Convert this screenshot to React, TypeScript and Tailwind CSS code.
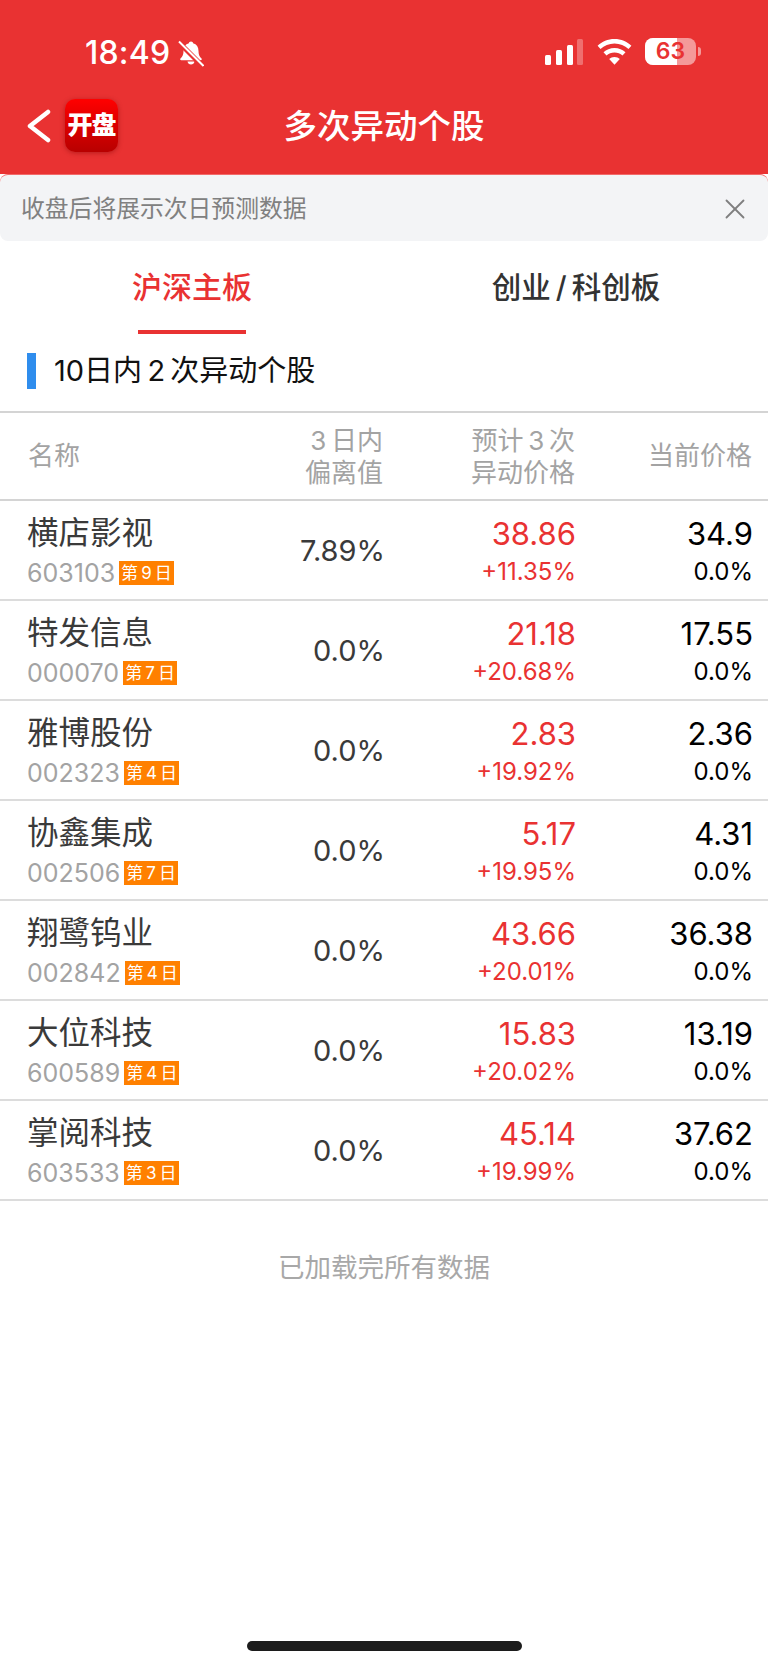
import { X } from 'lucide-react';

const font = { fontFamily: '"Inter", "Noto Sans CJK SC", sans-serif' };

const stocks = [
  { name: '横店影视', code: '603103', days: '第\u20099\u2009日', dev: '7.89%', target: '38.86', pct: '+11.35%', price: '34.9' },
  { name: '特发信息', code: '000070', days: '第\u20097\u2009日', dev: '0.0%', target: '21.18', pct: '+20.68%', price: '17.55' },
  { name: '雅博股份', code: '002323', days: '第\u20094\u2009日', dev: '0.0%', target: '2.83', pct: '+19.92%', price: '2.36' },
  { name: '协鑫集成', code: '002506', days: '第\u20097\u2009日', dev: '0.0%', target: '5.17', pct: '+19.95%', price: '4.31' },
  { name: '翔鹭钨业', code: '002842', days: '第\u20094\u2009日', dev: '0.0%', target: '43.66', pct: '+20.01%', price: '36.38' },
  { name: '大位科技', code: '600589', days: '第\u20094\u2009日', dev: '0.0%', target: '15.83', pct: '+20.02%', price: '13.19' },
  { name: '掌阅科技', code: '603533', days: '第\u20093\u2009日', dev: '0.0%', target: '45.14', pct: '+19.99%', price: '37.62' },
];

const StatusBar = () => (
  <div className="flex h-[92px] items-start justify-between pl-[85px] pr-[67px] pt-[36px] text-white">
    <div className="flex items-center gap-[8px]">
      <span className="text-[32px] font-medium leading-[34px] tracking-[0.2px]">18:49</span>
      <svg width="26" height="27" viewBox="0 0 26 26" fill="white">
        <path d="M13 1c-1.200 0-2 .8-2.100 1.800C7.300 3.800 5.500 6.700 5.500 10.500c0 3.500-.8 5.500-3 7.500-.7.700-.2 1.700.7 1.700h19.600c.9 0 1.400-1 .7-1.700-2.200-2-3-4-3-7.500 0-3.800-1.800-6.700-5.400-7.700C15 1.800 14.200 1 13 1z" />
        <path d="M9.500 21h7c-.3 1.800-1.700 3-3.500 3s-3.200-1.200-3.500-3z" />
        <path d="M0 1 L25 26" stroke="#e93232" strokeWidth="5" />
        <path d="M1 1 L25.500 25.500" stroke="white" strokeWidth="2" />
      </svg>
    </div>
    <div className="flex items-center gap-[13px] pt-[2px]">
      <svg width="39" height="26" viewBox="0 0 39 26" fill="white">
        <rect x="0" y="16" width="6" height="10" rx="1.500" />
        <rect x="11" y="11" width="6" height="15" rx="1.500" />
        <rect x="22" y="6" width="6" height="20" rx="1.500" />
        <rect x="32" y="0" width="6" height="26" rx="1.500" fillOpacity="0.3" />
      </svg>
      <svg width="35" height="26" viewBox="0 0 35 26" fill="white">
        <path d="M17.500 0C10.800 0 5 2.600.6 6.800L3.500 10c3.700-3.400 8.600-5.500 14-5.500s10.300 2.100 14 5.500l2.900-3.200C30 2.600 24.200 0 17.500 0z" />
        <path d="M17.500 9c-4.300 0-8.200 1.700-11 4.300l3 3.200c2.100-2 4.900-3.100 8-3.100s5.900 1.100 8 3.100l3-3.200C25.700 10.700 21.800 9 17.500 9z" />
        <path d="M17.500 18c-2.100 0-4 .8-5.300 2.100l5.300 5.700 5.300-5.700C21.500 18.800 19.600 18 17.500 18z" />
      </svg>
      <div className="flex items-center gap-[2px]">
        <div className="relative h-[27px] w-[51px] overflow-hidden rounded-[8px] bg-white/50">
          <div className="absolute inset-y-0 left-0 w-[32px] bg-white" />
          <span className="absolute inset-0 text-center text-[23px] font-semibold leading-[27px] text-[#e93232]">63</span>
        </div>
        <div className="h-[9px] w-[3px] rounded-r-full bg-white/50" />
      </div>
    </div>
  </div>
);

const NavBar = () => (
  <div className="relative flex h-[82px] items-start pl-[26px] pt-[7px]">
    <svg width="26" height="34" viewBox="0 0 26 34" fill="none" className="mt-[10px]">
      <path d="M22 3 L4 17 L22 31" stroke="white" strokeWidth="4.500" strokeLinecap="round" strokeLinejoin="round" />
    </svg>
    <div className="ml-[13px] flex h-[53px] w-[53px] items-center justify-center rounded-[10px] bg-gradient-to-b from-[#ff0000] to-[#b80000] shadow-[0_1px_5px_rgba(120,0,0,0.45)]">
      <span className="text-[25px] font-black leading-none tracking-[-1px] text-white">开盘</span>
    </div>
    <div className="absolute inset-x-0 top-[12px] text-center text-[33.500px] font-medium leading-[44px] text-white">多次异动个股</div>
  </div>
);

const App = () => (
  <div className="h-[1665px] w-[768px] overflow-hidden bg-white" style={font}>
    <div className="bg-[#e93232]">
      <StatusBar />
      <NavBar />
    </div>
    <div className="flex h-[67px] items-center justify-between rounded-[8px] border-t border-t-[#f26a6a] bg-[#f3f4f6] pl-[21px] pr-[16px] pt-[2px]">
      <span className="text-[23.800px] leading-[32px] text-[#808080]">收盘后将展示次日预测数据</span>
      <X size={34} strokeWidth={1.300} className="text-[#7f7f7f]" />
    </div>
    <div className="flex h-[93px]">
      <div className="flex flex-1 flex-col items-center pt-[26px]">
        <span className="text-[30px] font-medium leading-[40px] text-[#e93232]">沪深主板</span>
        <div className="mt-[23px] h-[4px] w-[108px] bg-[#e93232]" />
      </div>
      <div className="flex flex-1 flex-col items-center pt-[26px]">
        <span className="text-[29.500px] font-medium leading-[40px] text-[#333333]">创业{'\u2009'}/{'\u2009'}科创板</span>
      </div>
    </div>
    <div className="flex h-[77px] items-start pl-[27px] pt-[19px]">
      <div className="h-[36px] w-[9px] bg-[#2f8ded]" />
      <span className="ml-[18px] text-[29px] leading-[36px] text-[#111111]">10日内{'\u2009'}2{'\u2009'}次异动个股</span>
    </div>
    <div className="flex h-[90px] items-center border-y-2 border-y-[#d4d4d4] pr-[16px] text-[26px] leading-[32px] text-[#a3a3a3]">
      <div className="w-[252px] pl-[28px]">名称</div>
      <div className="w-[131px] pt-[2px] text-right">3{'\u2009'}日内<br />偏离值</div>
      <div className="w-[192px] pt-[2px] text-right">预计{'\u2009'}3{'\u2009'}次<br />异动价格</div>
      <div className="flex-1 text-right">当前价格</div>
    </div>
    {stocks.map((s) => (
      <div key={s.code} className="flex h-[100px] items-center border-b-2 border-b-[#dcdcdc] pr-[15px]">
        <div className="w-[252px] pl-[27px] pt-[2px]">
          <div className="text-[31.500px] leading-[38px] text-[#3a3a3a]">{s.name}</div>
          <div className="mt-[5px] flex items-center gap-[4px]">
            <span className="text-[25px] leading-[32px] text-[#a3a3a3]">{s.code}</span>
            <span className="bg-[#ff8000] px-[2px] text-[17px] leading-[24px] text-white">{s.days}</span>
          </div>
        </div>
        <div className="w-[133px] pt-[1px] text-right text-[29px] text-[#3a3a3a]">{s.dev}</div>
        <div className="w-[191px] pt-[2px] text-right">
          <div className="text-[31px] leading-[38px] text-[#e93232]">{s.target}</div>
          <div className="mt-[3px] text-[24px] leading-[32px] text-[#e93232]">{s.pct}</div>
        </div>
        <div className="flex-1 pt-[2px] text-right text-black">
          <div className="text-[31px] leading-[38px]">{s.price}</div>
          <div className="mt-[3px] text-[24px] leading-[32px]">0.0%</div>
        </div>
      </div>
    ))}
    <div className="pt-[49px] text-center text-[26.500px] leading-[34px] text-[#a8a8a8]">已加载完所有数据</div>
    <div className="mx-auto mt-[357px] h-[10px] w-[275px] rounded-full bg-[#1c1c1c]" />
  </div>
);

export default App;
